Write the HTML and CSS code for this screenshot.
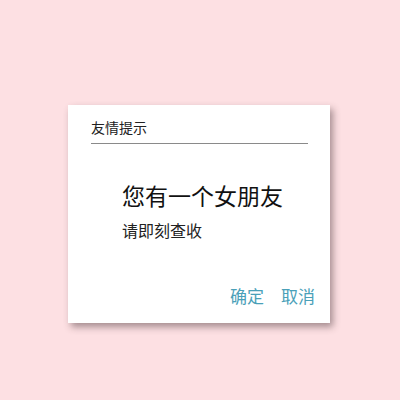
FILE: index.html
```html
<!DOCTYPE html>
<html lang="zh">
<head>
<meta charset="utf-8">
<link rel="stylesheet" href="styles.css">
</head>
<body>
<div class="dialog">
  <div class="header">友情提示</div>
  <div class="body">
    <div class="main">您有一个女朋友</div>
    <div class="sub">请即刻查收</div>
  </div>
  <div class="actions">
    <span class="btn">确定</span>
    <span class="btn">取消</span>
  </div>
</div>
</body>
</html>
```
FILE: styles.css
```css
html, body {
  margin: 0;
  padding: 0;
  width: 400px;
  height: 400px;
  background: #fde0e3;
  font-family: "Noto Sans CJK SC", "Noto Sans", sans-serif;
}
body {
  padding-top: 105px;
  padding-left: 68px;
  box-sizing: border-box;
}
.dialog {
  width: 262px;
  height: 218px;
  background: #ffffff;
  box-shadow: 3px 4px 7px rgba(60, 40, 45, 0.45);
  display: flex;
  flex-direction: column;
  box-sizing: border-box;
  padding-top: 12px;
}
.header {
  margin-left: 23px;
  margin-right: 22px;
  font-size: 14px;
  line-height: 20px;
  color: #222;
  padding-bottom: 6px;
  border-bottom: 1px solid #8a8a8a;
}
.body {
  padding-left: 54px;
  margin-top: 36px;
}
.main {
  font-size: 23px;
  line-height: 30px;
  color: #111;
}
.sub {
  margin-top: 8px;
  font-size: 16px;
  line-height: 24px;
  color: #222;
}
.actions {
  margin-top: auto;
  display: flex;
  justify-content: flex-end;
  gap: 17px;
  padding-right: 15px;
  padding-bottom: 15px;
}
.btn {
  font-size: 17px;
  line-height: 24px;
  color: #4aa0b8;
}
```
